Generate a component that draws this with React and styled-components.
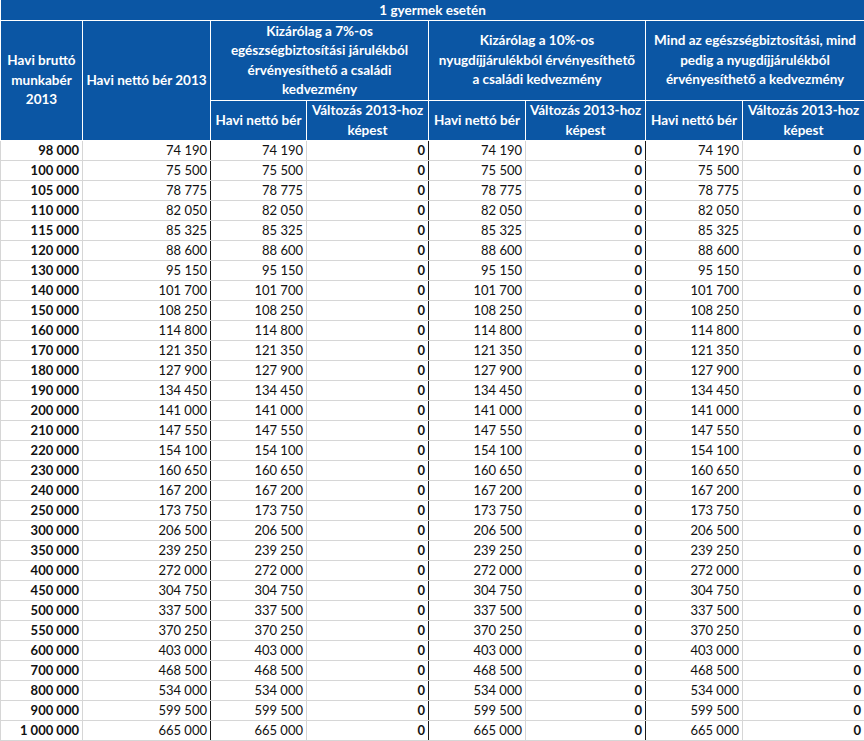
import React from 'react'
import styled, { createGlobalStyle } from 'styled-components'

const GlobalStyle = createGlobalStyle`
    body {
        margin: 0;
        background: #ffffff;
        font-family: Lato, "Open Sans", sans-serif;
    }
`

const blue = '#0b56a4'
const grid = '#d6d6d6'

const widths = [82, 128, 96, 122, 97, 120, 97, 122]

const gross = [98000, 100000, 105000, 110000, 115000, 120000, 130000, 140000, 150000, 160000,
    170000, 180000, 190000, 200000, 210000, 220000, 230000, 240000, 250000, 300000,
    350000, 400000, 450000, 500000, 550000, 600000, 700000, 800000, 900000, 1000000]

const net = [74190, 75500, 78775, 82050, 85325, 88600, 95150, 101700, 108250, 114800,
    121350, 127900, 134450, 141000, 147550, 154100, 160650, 167200, 173750, 206500,
    239250, 272000, 304750, 337500, 370250, 403000, 468500, 534000, 599500, 665000]

const fmt = n => String(n).replace(/\B(?=(\d{3})+(?!\d))/g, ' ')

const groups = [
    ['Kizárólag a 7%-os', 'egészségbiztosítási járulékból', 'érvényesíthető a családi', 'kedvezmény'],
    ['Kizárólag a 10%-os', 'nyugdíjjárulékból érvényesíthető', 'a családi kedvezmény'],
    ['Mind az egészségbiztosítási, mind', 'pedig a nyugdíjjárulékból', 'érvényesíthető a kedvezmény'],
]

const App = () => {
    return (
        <>
            <GlobalStyle />
            <Table>
                <colgroup>
                    {widths.map((w, i) => <col key={i} style={{ width: w }} />)}
                </colgroup>
                <thead>
                    <tr>
                        <Title colSpan={8}>1 gyermek esetén</Title>
                    </tr>
                    <tr>
                        <Head rowSpan={2}>Havi bruttó<br />munkabér<br />2013</Head>
                        <Head rowSpan={2}>Havi nettó bér 2013</Head>
                        {groups.map((g, i) => (
                            <Group key={i} colSpan={2}>
                                {g.map((line, j) => <div key={j}>{line}</div>)}
                            </Group>
                        ))}
                    </tr>
                    <tr>
                        {groups.map((g, i) => (
                            <React.Fragment key={i}>
                                <Sub>Havi nettó bér</Sub>
                                <Sub>Változás 2013-hoz<br />képest</Sub>
                            </React.Fragment>
                        ))}
                    </tr>
                </thead>
                <tbody>
                    {gross.map((g, i) => (
                        <Row key={g}>
                            <Cell bold>{fmt(g)}</Cell>
                            <Cell edge>{fmt(net[i])}</Cell>
                            <Cell>{fmt(net[i])}</Cell>
                            <Cell bold edge>0</Cell>
                            <Cell>{fmt(net[i])}</Cell>
                            <Cell bold edge>0</Cell>
                            <Cell>{fmt(net[i])}</Cell>
                            <Cell bold>0</Cell>
                        </Row>
                    ))}
                </tbody>
            </Table>
        </>
    )
}

export default App

const Table = styled.table`
    width: 864px;
    table-layout: fixed;
    border-collapse: collapse;
    font-size: 13px;
    color: #111111;
`
const HeadCell = styled.th`
    background: ${blue};
    color: #ffffff;
    font-size: 13.5px;
    font-weight: 700;
    border: 1px solid #ffffff;
    text-align: center;
    vertical-align: middle;
    padding: 0 2px;
    line-height: 19.5px;
    white-space: nowrap;
`
const Title = styled(HeadCell)`
    height: 20px;
    padding: 0;
    border-top: none;
    line-height: 18px;
`
const Head = styled(HeadCell)`
    height: 118px;
`
const Group = styled(HeadCell)`
    height: 79px;
`
const Sub = styled(HeadCell)`
    height: 39px;
`
const Row = styled.tr`
    height: 20px;
`
const Cell = styled.td`
    height: 19px;
    padding: 0 3px 0 0;
    text-align: right;
    line-height: 19px;
    border: 1px solid ${grid};
    border-right: 1px solid ${props => (props.edge ? '#1a1a1a' : grid)};
    font-weight: ${props => (props.bold ? 700 : 400)};
    white-space: nowrap;
`
